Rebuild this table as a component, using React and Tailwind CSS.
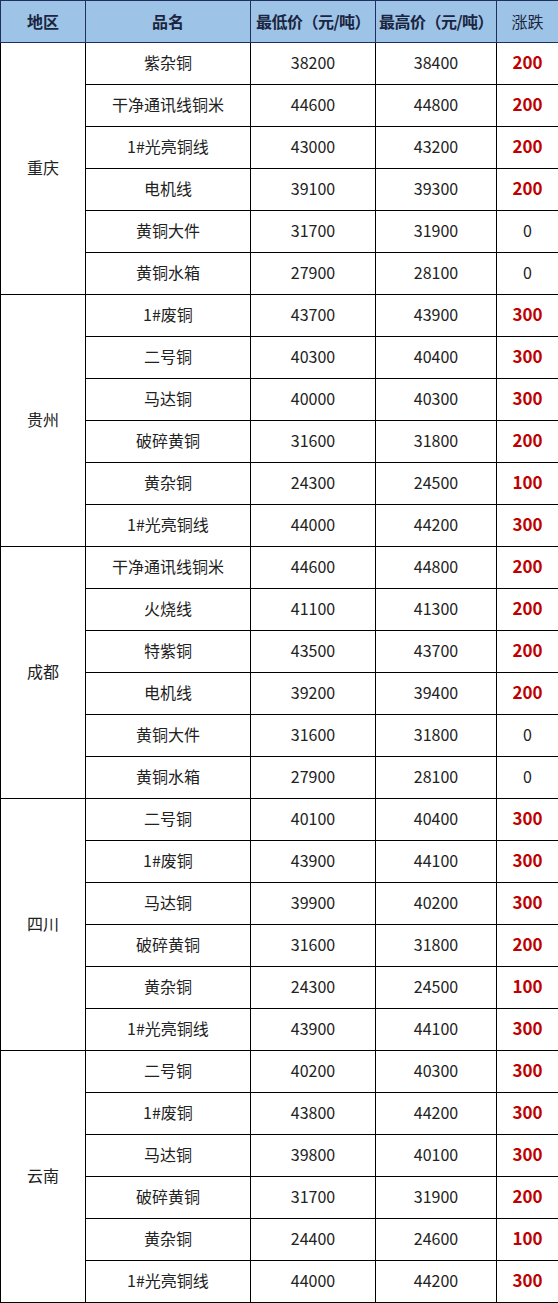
const regions = [
  {
    name: '重庆',
    rows: [
      ['紫杂铜', '38200', '38400', '200'],
      ['干净通讯线铜米', '44600', '44800', '200'],
      ['1#光亮铜线', '43000', '43200', '200'],
      ['电机线', '39100', '39300', '200'],
      ['黄铜大件', '31700', '31900', '0'],
      ['黄铜水箱', '27900', '28100', '0'],
    ],
  },
  {
    name: '贵州',
    rows: [
      ['1#废铜', '43700', '43900', '300'],
      ['二号铜', '40300', '40400', '300'],
      ['马达铜', '40000', '40300', '300'],
      ['破碎黄铜', '31600', '31800', '200'],
      ['黄杂铜', '24300', '24500', '100'],
      ['1#光亮铜线', '44000', '44200', '300'],
    ],
  },
  {
    name: '成都',
    rows: [
      ['干净通讯线铜米', '44600', '44800', '200'],
      ['火烧线', '41100', '41300', '200'],
      ['特紫铜', '43500', '43700', '200'],
      ['电机线', '39200', '39400', '200'],
      ['黄铜大件', '31600', '31800', '0'],
      ['黄铜水箱', '27900', '28100', '0'],
    ],
  },
  {
    name: '四川',
    rows: [
      ['二号铜', '40100', '40400', '300'],
      ['1#废铜', '43900', '44100', '300'],
      ['马达铜', '39900', '40200', '300'],
      ['破碎黄铜', '31600', '31800', '200'],
      ['黄杂铜', '24300', '24500', '100'],
      ['1#光亮铜线', '43900', '44100', '300'],
    ],
  },
  {
    name: '云南',
    rows: [
      ['二号铜', '40200', '40300', '300'],
      ['1#废铜', '43800', '44200', '300'],
      ['马达铜', '39800', '40100', '300'],
      ['破碎黄铜', '31700', '31900', '200'],
      ['黄杂铜', '24400', '24600', '100'],
      ['1#光亮铜线', '44000', '44200', '300'],
    ],
  },
];

const font = { fontFamily: '"Microsoft YaHei", "Noto Sans CJK SC", "Noto Sans", sans-serif' };

export default function App() {
  return (
    <div className="w-[558px] bg-white" style={font}>
      <table className="w-[558px] border-collapse table-fixed text-[16px] leading-none text-[#222]">
        <colgroup>
          <col className="w-[85px]" />
          <col className="w-[165px]" />
          <col className="w-[125px]" />
          <col className="w-[121px]" />
          <col className="w-[62px]" />
        </colgroup>
        <thead>
          <tr className="h-[42px] bg-[#9dc3e6] text-[#1a2540]">
            <th className="border border-[#1f3060] pb-[2px] font-bold">地区</th>
            <th className="border border-[#1f3060] pb-[2px] font-bold">品名</th>
            <th className="border border-[#1f3060] pb-[2px] font-bold tracking-[-0.5px] whitespace-nowrap">最低价（元/吨）</th>
            <th className="border border-[#1f3060] pb-[2px] font-bold tracking-[-0.5px] whitespace-nowrap">最高价（元/吨）</th>
            <th className="border border-[#1f3060] pb-[2px] font-normal">涨跌</th>
          </tr>
        </thead>
        <tbody>
          {regions.map((region) =>
            region.rows.map((row, i) => (
              <tr key={region.name + i} className="h-[42px]">
                {i === 0 && (
                  <td rowSpan={6} className="border border-black pb-[4px] text-center">
                    {region.name}
                  </td>
                )}
                <td className="border border-black pb-[4px] text-center">{row[0]}</td>
                <td className="border border-black pb-[4px] text-center">{row[1]}</td>
                <td className="border border-black pb-[4px] text-center">{row[2]}</td>
                <td
                  className={`border border-black pb-[4px] text-center ${
                    row[3] === '0' ? '' : 'font-bold text-[17px] text-[#c00000]'
                  }`}
                >
                  {row[3]}
                </td>
              </tr>
            ))
          )}
        </tbody>
      </table>
    </div>
  );
}
